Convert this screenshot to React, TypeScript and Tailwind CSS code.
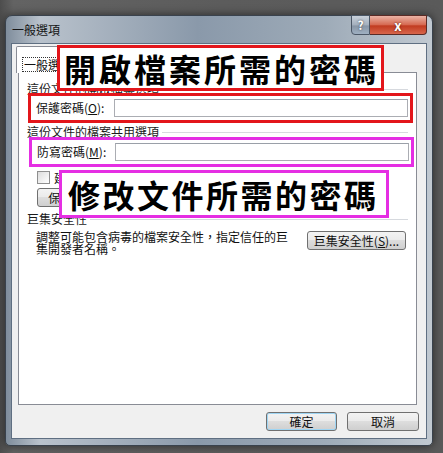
import React from "react";

const cjk = "font-['Noto_Sans_CJK_TC','Noto_Sans_CJK_SC',sans-serif]";

function GroupHeader({ label }: { label: string }) {
  return (
    <div className="flex h-[12px] items-center gap-[3px] pl-[8px] pr-[8px]">
      <span className="whitespace-nowrap text-[12px] leading-[12px] text-[#1b1b1b]">{label}</span>
      <div className="h-px flex-1 bg-[#d6d9de]" />
    </div>
  );
}

function WinButton({ children, className = "" }: { children: React.ReactNode; className?: string }) {
  return (
    <div
      className={`flex h-[19px] items-center justify-center whitespace-nowrap rounded-[3px] border border-[#707070] bg-[linear-gradient(#f3f3f3_0%,#ebebeb_45%,#dddddd_50%,#cfcfcf_100%)] text-[12px] leading-none text-[#111] ${className}`}
    >
      {children}
    </div>
  );
}

function PasswordRow({ label, mnemonic, color }: { label: string; mnemonic: string; color: string }) {
  return (
    <div className={`relative z-10 flex h-[30px] w-[385px] items-center border-[3px] bg-white ${color}`}>
      <span className="w-[83px] whitespace-nowrap pl-[5px] text-[12px] leading-none text-[#111]">
        {label}(<span className="underline">{mnemonic}</span>):
      </span>
      <div className="h-[18px] w-[294px] border border-[#abadb3] border-t-[#9aa0a8] bg-white" />
    </div>
  );
}

export default function App() {
  return (
    <div
      className={`relative h-[453px] w-[443px] overflow-hidden bg-[linear-gradient(90deg,#4d4d4d_0%,#636363_3%,#5c5c5c_50%,#5a5a5a_100%)] pl-[5px] pt-[15px] ${cjk}`}
    >
      {/* window */}
      <div className="flex h-[431px] w-[428px] flex-col rounded-t-[7px] rounded-b-[5px] border border-[#39424d] bg-[linear-gradient(90deg,#7f8d9c_0%,#b9c2cc_8%,#8a99aa_45%,#9eabb8_75%,#c1c9d1_100%)] shadow-[0_0_10px_rgba(0,0,0,0.55)]">
        {/* title bar */}
        <div className="flex h-[27px] items-start">
          <span className="pl-[6px] pt-[8px] text-[12px] leading-[12px] text-[#151515]">一般選項</span>
          <div className="ml-auto mr-[5px] mt-[-1px] flex h-[20px]">
            <div className="flex w-[19px] items-center justify-center rounded-bl-[4px] border border-[#4b5766] bg-[linear-gradient(#c9d1da_0%,#a3afbd_50%,#8896a6_55%,#9fb0c2_100%)] text-[12px] font-bold leading-none text-white [text-shadow:0_0_2px_#333]">
              ?
            </div>
            <div className="flex w-[57px] items-center justify-center rounded-br-[4px] border border-l-0 border-[#5a2b26] bg-[linear-gradient(#eab3a5_0%,#d66a52_48%,#c13b20_55%,#d8664b_100%)] text-[13px] font-bold leading-none text-white [text-shadow:0_0_2px_#4a1207]">
              x
            </div>
          </div>
        </div>

        {/* client area */}
        <div className="mx-[5px] flex h-[396px] flex-col border border-[#5f6f82] bg-[#f0f0f0]">
          {/* tab strip */}
          <div className="flex h-[28px] items-end">
            <div className="relative z-10 mb-[-1px] ml-[4px] flex h-[27px] w-[62px] items-start overflow-hidden rounded-t-[2px] border border-b-0 border-[#898c95] bg-white pl-[5px] pt-[10px]">
              <span className="whitespace-nowrap border border-dotted border-[#333] px-[1px] text-[12px] leading-[13px] text-[#111]">
                一般選項
              </span>
            </div>
          </div>

          {/* tab page */}
          <div className="ml-[6px] flex h-[333px] w-[399px] flex-col border border-[#898c95] bg-white">
            <div className="mt-[10px]">
              <GroupHeader label="這份文件的開啟檔案選項" />
            </div>
            <div className="ml-[9px] mt-[-2px]">
              <PasswordRow label="保護密碼" mnemonic="O" color="border-[#e3161b]" />
            </div>
            <div className="mt-[3px]">
              <GroupHeader label="這份文件的檔案共用選項" />
            </div>
            <div className="ml-[10px] mt-[-1px]">
              <PasswordRow label="防寫密碼" mnemonic="M" color="border-[#e52ee3]" />
            </div>
            <div className="ml-[18px] mt-[4px] flex h-[13px] items-center gap-[4px]">
              <div className="h-[13px] w-[13px] border border-[#8f8f8f] bg-[linear-gradient(135deg,#dcdcdc,#ffffff)]" />
              <span className="whitespace-nowrap text-[12px] leading-none text-[#111]">建議以唯讀方式開啟(E)</span>
            </div>
            <WinButton className="ml-[18px] mt-[4px] w-[96px]">保護文件(P)...</WinButton>
            <div className="mt-[6px]">
              <GroupHeader label="巨集安全性" />
            </div>
            <div className="mt-[6px] flex items-start">
              <p className="w-[274px] pl-[17px] text-[12px] leading-[12px] text-[#111]">
                調整可能包含病毒的檔案安全性，指定信任的巨集開發者名稱。
              </p>
              <WinButton className="ml-auto mr-[10px] w-[99px]">
                巨集安全性(<span className="underline">S</span>)...
              </WinButton>
            </div>
          </div>

          {/* footer buttons */}
          <div className="flex justify-end gap-[10px] pr-[7px] pt-[7px]">
            <WinButton className="w-[71px] border-[#3c7fb1] shadow-[inset_0_0_0_1px_#9fd5f3]">確定</WinButton>
            <WinButton className="w-[72px]">取消</WinButton>
          </div>
        </div>
      </div>

      {/* annotation callouts */}
      <div className="absolute left-[57px] top-[45px] z-20 flex h-[46px] w-[327px] items-center border-[3px] border-[#e3161b] bg-white pl-[4px]">
        <span className="whitespace-nowrap text-[32px] font-bold leading-none tracking-[3px] text-black">
          開啟檔案所需的密碼
        </span>
      </div>
      <div className="absolute left-[59px] top-[170px] z-20 flex h-[48px] w-[330px] items-center border-[3px] border-[#e52ee3] bg-white pl-[6px]">
        <span className="whitespace-nowrap text-[32px] font-bold leading-none tracking-[2.5px] text-black">
          修改文件所需的密碼
        </span>
      </div>
    </div>
  );
}
